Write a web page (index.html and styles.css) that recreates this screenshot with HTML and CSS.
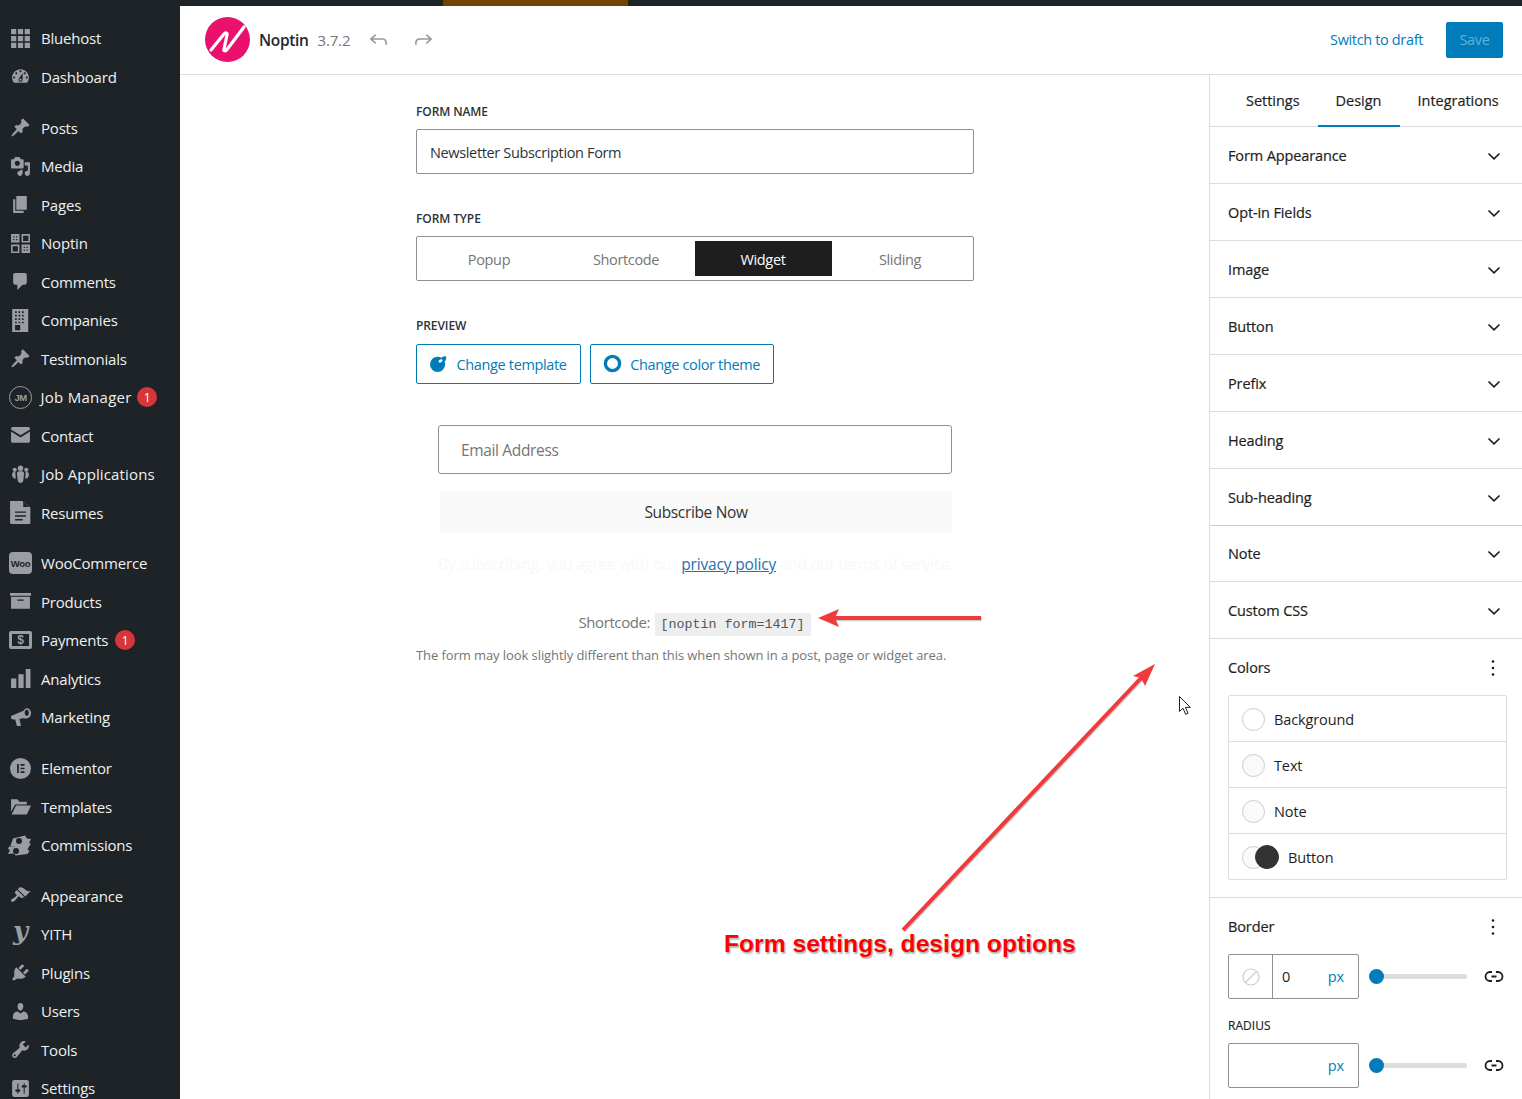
FILE: index.html
```html
<!DOCTYPE html>
<html lang="en">
<head>
<meta charset="utf-8">
<title>Noptin form editor</title>
<link rel="stylesheet" href="styles.css">
</head>
<body>
<svg class="defs" width="0" height="0" aria-hidden="true">
  <symbol id="chev" viewBox="0 0 14 9"><path d="M1.500 1.500 7 6.800l5.500-5.300" fill="none" stroke="#1e1e1e" stroke-width="1.700"/></symbol>
  <symbol id="dots" viewBox="0 0 4 18"><circle cx="2" cy="2.500" r="1.300"/><circle cx="2" cy="9" r="1.300"/><circle cx="2" cy="15.500" r="1.300"/></symbol>
  <symbol id="link" viewBox="0 0 20 13"><path d="M8 2H6a4.500 4.500 0 0 0 0 9h2M12 2h2a4.500 4.500 0 0 1 0 9h-2M7.500 6.500h5" fill="none" stroke="#1e1e1e" stroke-width="1.800"/></symbol>
</svg>
<div class="app">
  <nav class="sidebar">
    <div class="group">
      <a class="item"><svg class="ico" viewBox="0 0 20 20"><path d="M1 1h5v5H1zM7.500 1h5v5h-5zM14 1h5v5h-5zM1 7.500h5v5H1zM7.500 7.500h5v5h-5zM14 7.500h5v5h-5zM1 14h5v5H1zM7.500 14h5v5h-5zM14 14h5v5h-5z"/></svg>Bluehost</a>
      <a class="item"><svg class="ico" viewBox="0 0 20 20"><path d="M3.760 16h12.480c1.100-1.370 1.760-3.110 1.760-5 0-4.420-3.580-8-8-8s-8 3.580-8 8c0 1.890.660 3.630 1.760 5zM10 4c.550 0 1 .450 1 1s-.450 1-1 1-1-.450-1-1 .450-1 1-1zM6 6c.550 0 1 .450 1 1s-.450 1-1 1-1-.450-1-1 .450-1 1-1zm8 0c.550 0 1 .450 1 1s-.450 1-1 1-1-.450-1-1 .450-1 1-1zm-5.370 5.550L12 7v6c0 1.100-.900 2-2 2s-2-.900-2-2c0-.570.240-1.080.630-1.450zM4 10c.550 0 1 .450 1 1s-.450 1-1 1-1-.450-1-1 .450-1 1-1zm12 0c.550 0 1 .450 1 1s-.450 1-1 1-1-.450-1-1 .450-1 1-1zm-5 3c0-.550-.450-1-1-1s-1 .450-1 1 .450 1 1 1 1-.450 1-1z" fill-rule="evenodd"/></svg>Dashboard</a>
    </div>
    <div class="group">
      <a class="item"><svg class="ico" viewBox="0 0 20 20"><path d="M10.440 3.020l1.820-1.820 6.360 6.350-1.830 1.820c-1.050-.680-2.480-.570-3.410.360l-.750.750c-.920.930-1.040 2.350-.350 3.410l-1.830 1.820-2.410-2.410-2.800 2.790c-.420.420-3.380 2.710-3.800 2.290s1.860-3.390 2.280-3.810l2.790-2.790L4.100 9.360l1.830-1.820c1.050.690 2.480.570 3.400-.360l.750-.750c.930-.920 1.050-2.350.360-3.410z"/></svg>Posts</a>
      <a class="item"><svg class="ico" viewBox="0 0 20 20"><path fill-rule="evenodd" d="M13 11V4c0-.550-.450-1-1-1h-1.670L9 1H5L3.670 3H2c-.550 0-1 .450-1 1v7c0 .550.450 1 1 1h10c.550 0 1-.450 1-1zM7 4.500c1.380 0 2.500 1.120 2.500 2.500S8.380 9.500 7 9.500 4.500 8.380 4.500 7 5.620 4.500 7 4.500zM14 6h5v10.500c0 1.380-1.120 2.500-2.500 2.500S14 17.880 14 16.500s1.120-2.500 2.500-2.500c.170 0 .340.020.500.050V9h-3V6zm-4 8.050V13h2v3.500c0 1.380-1.120 2.500-2.500 2.500S7 17.880 7 16.500 8.120 14 9.500 14c.170 0 .340.020.500.050z"/></svg>Media</a>
      <a class="item"><svg class="ico" viewBox="0 0 20 20"><path d="M6 15V2h10v13H6zm-1 1h8v2H3V5h2v11z"/></svg>Pages</a>
      <a class="item"><svg class="ico" viewBox="0 0 20 20"><path fill-rule="evenodd" d="M1 1h8v8H1zM3 3v1.300h1.300V3zm2.700 0v1.300H7V3zM3 5.700V7h1.300V5.700zm2.700 0V7H7V5.700zM11 1h8v8h-8zm1.500 1.500v5h5v-5zM1 11h8v8H1zm1.500 1.500v5h5v-5zM11 11h8v8h-8zm2 2v1.300h1.300V13zm2.700 0v1.300H17V13zM13 15.700V17h1.300v-1.300zm2.700 0V17H17v-1.300z"/></svg>Noptin</a>
      <a class="item"><svg class="ico" viewBox="0 0 20 20"><path d="M5 2h9c1.100 0 2 .900 2 2v7c0 1.100-.900 2-2 2h-2l-5 5v-5H5c-1.100 0-2-.900-2-2V4c0-1.100.900-2 2-2z"/></svg>Comments</a>
      <a class="item"><svg class="ico tall" viewBox="1.100 0 18.300 20"><path fill-rule="evenodd" d="M3 0h14v20H3zM5.500 2v1.500H7V2zm3 0v1.500H10V2zm3 0v1.500H13V2zM5.500 5v1.500H7V5zm3 0v1.500H10V5zm3 0v1.500H13V5zM5.500 8v1.500H7V8zm3 0v1.500H10V8zm3 0v1.500H13V8zM5.500 11v1.500H7V11zm3 0v1.500H10V11zm3 0v1.500H13V11zM5.500 14v4.500H10V14z"/></svg>Companies</a>
      <a class="item"><svg class="ico" viewBox="0 0 20 20"><path d="M10.440 3.020l1.820-1.820 6.360 6.350-1.830 1.820c-1.050-.680-2.480-.570-3.410.360l-.750.750c-.920.930-1.040 2.350-.350 3.410l-1.830 1.820-2.410-2.410-2.800 2.790c-.420.420-3.380 2.710-3.800 2.290s1.860-3.390 2.280-3.810l2.790-2.790L4.100 9.360l1.830-1.820c1.050.690 2.480.570 3.400-.360l.750-.750c.930-.920 1.050-2.350.360-3.410z"/></svg>Testimonials</a>
      <a class="item tight job-m"><span class="jm">JM</span>Job Manager<span class="badge">1</span></a>
      <a class="item"><svg class="ico" viewBox="0 0 20 20"><path d="M1 3.500c0-.800.700-1.500 1.500-1.500h15c.800 0 1.500.700 1.500 1.500v.700l-9 5.500-9-5.500zM1 6.300l9 5.500 9-5.500V15.500c0 .800-.700 1.500-1.500 1.500h-15c-.800 0-1.500-.700-1.500-1.500z"/></svg>Contact</a>
      <a class="item job-a"><svg class="ico" viewBox="0 0 20 20"><circle cx="10" cy="4" r="2.600"/><circle cx="4.500" cy="5.500" r="2"/><circle cx="15.500" cy="5.500" r="2"/><path d="M6.600 9c0-1 1-2 2-2h2.800c1 0 2 1 2 2l-.600 6c-.200 1.500-1.200 3-2.800 3s-2.600-1.500-2.800-3zM2 9.500c0-1 .800-1.800 1.800-1.800h1.300L5.500 14c-1.800 0-3.500-1.500-3.500-3.500zM18 9.500c0-1-.800-1.800-1.800-1.800h-1.300L14.500 14c1.800 0 3.500-1.500 3.500-3.500z"/></svg>Job Applications</a>
      <a class="item"><svg class="ico tall" viewBox="0 0 19 21"><path fill-rule="evenodd" d="M0 0h11l7.500 6v14a1 1 0 0 1-1 1H1a1 1 0 0 1-1-1zM4.500 9.500v1.300h10V9.500zm0 3.500v1.300h10V13zm0 3.500v1.300h7v-1.300zM12 1v4.500h5.500z"/></svg>Resumes</a>
    </div>
    <div class="group">
      <a class="item"><span class="woo">Woo</span>WooCommerce</a>
      <a class="item"><svg class="ico" viewBox="0 0 20 20"><path d="M0 2h20v2.500H0zM1 5.500h18V17H1zM7 8v1.200h6V8z" fill-rule="evenodd"/></svg>Products</a>
      <a class="item"><span class="pay">$</span>Payments<span class="badge">1</span></a>
      <a class="item"><svg class="ico" viewBox="0 0 20 20"><path d="M1 10h5v9H1zM8 6h5v13H8zM15 1h4.500v18H15z"/></svg>Analytics</a>
      <a class="item"><svg class="ico" viewBox="0 0 20 20"><path fill-rule="evenodd" d="M1 8.500 13 3.500c1-3 6-3.500 7 1.500.500 4-2.500 6.500-5.500 6L12 10.800 9 11.500l1.500 6.500H6.500L5 12H3a2 2 0 0 1-2-2zM16 2.500c-1.500 0-2 1.500-2 3s1 3 2 3 2-1.500 2-3-.600-3-2-3z"/></svg>Marketing</a>
    </div>
    <div class="group">
      <a class="item"><svg class="ico" viewBox="0 0 20 20"><path fill-rule="evenodd" d="M10 0a10 10 0 1 1 0 20 10 10 0 0 1 0-20zM6.800 5.800v8.400h1.600V5.800zm3.200 0v1.500h3.800V5.800zm0 3.400v1.500h3.800V9.200zm0 3.500v1.500h3.800v-1.500z"/></svg>Elementor</a>
      <a class="item"><svg class="ico" viewBox="0 0 20 20"><path d="M1 3h6l2 2.500h7V8H5L1 15zM5.800 9H20l-4 8.500H1.500z"/></svg>Templates</a>
      <a class="item"><svg class="ico wide" viewBox="0 0 24 20"><path fill-rule="evenodd" d="M5 3 17 0l2 3 4 .5-2 4 2 1-2 2.500H8l-6 .5zM1 11h20l-1.500 3 2 1.500-2 3-12 1.500-1.500-2-6 .5 2-4-2-1zM11 2.500a3 3 0 1 0 .01 6 3 3 0 0 0 0-6zM8 12.500a3 3 0 1 0 .01 6 3 3 0 0 0 0-6z"/></svg>Commissions</a>
    </div>
    <div class="group">
      <a class="item"><svg class="ico" viewBox="0 0 20 20"><path d="M14.480 11.060L7.410 3.990l1.500-1.500c.500-.560 2.300-.470 3.510.320 1.210.800 1.430 1.280 2.910 2.100 1.180.640 2.450 1.260 4.450.850zm-.710.710L6.700 4.700 4.930 6.470c-.390.390-.390 1.020 0 1.410l1.060 1.060c.390.390.390 1.030 0 1.420-.600.600-1.430 1.110-2.210 1.690-.350.260-.700.530-1.010.840C1.430 13.230.400 14.800 1.370 15.780c.980.980 2.550-.050 3.900-1.410.310-.310.580-.660.850-1.020.570-.780 1.080-1.610 1.690-2.210.390-.390 1.020-.390 1.410 0l1.060 1.060c.390.390 1.020.390 1.410 0z"/></svg>Appearance</a>
      <a class="item"><span class="yith">y</span>YITH</a>
      <a class="item"><svg class="ico" viewBox="0 0 20 20"><path d="M13.110 4.360L9.870 7.600 8 5.730l3.240-3.240c.350-.340 1.050-.200 1.560.320.520.510.660 1.210.310 1.550zm-8 1.770l.910-1.120 9.010 9.010-1.190.840c-.710.710-2.630 1.160-3.820 1.160H6.140L4.900 17.260c-.590.590-1.540.590-2.120 0-.590-.580-.590-1.530 0-2.120l1.240-1.240v-3.880c0-1.130.400-3.190 1.090-3.890zm7.260 3.970l3.240-3.240c.340-.350 1.040-.210 1.550.31.520.51.660 1.210.31 1.550l-3.240 3.250z"/></svg>Plugins</a>
      <a class="item"><svg class="ico" viewBox="0 0 20 20"><path d="M10 9.250c-2.270 0-2.730-3.440-2.730-3.440C7 4.020 7.820 2 9.970 2c2.160 0 2.980 2.020 2.710 3.810 0 0-.410 3.440-2.680 3.440zm0 2.570L12.720 10c2.390 0 4.520 2.330 4.520 4.530v2.490s-3.650 1.130-7.240 1.130c-3.650 0-7.240-1.130-7.240-1.130v-2.490c0-2.250 1.940-4.480 4.470-4.480z"/></svg>Users</a>
      <a class="item"><svg class="ico" viewBox="0 0 20 20"><path fill-rule="evenodd" d="M16.680 9.770c-1.340 1.340-3.300 1.670-4.950.990l-5.410 6.520c-.990.990-2.590.990-3.580 0s-.990-2.590 0-3.570l6.520-5.420c-.680-1.650-.350-3.610.990-4.950 1.280-1.280 3.120-1.620 4.720-1.060l-2.890 2.890 2.820 2.820 2.860-2.870c.530 1.580.180 3.390-1.080 4.650zM3.810 16.210c.400.390 1.040.390 1.430 0 .400-.400.400-1.040 0-1.430-.390-.400-1.030-.400-1.430 0-.390.390-.390 1.030 0 1.430z"/></svg>Tools</a>
      <a class="item"><svg class="ico" viewBox="0 0 20 20"><path fill-rule="evenodd" d="M18 16V4c0-1.100-.900-2-2-2H4c-1.100 0-2 .900-2 2v12c0 1.100.900 2 2 2h12c1.100 0 2-.900 2-2zM8 11h1c.550 0 1 .450 1 1s-.450 1-1 1H8v1.500c0 .280-.220.500-.500.500s-.500-.220-.500-.500V13H6c-.550 0-1-.450-1-1s.450-1 1-1h1V5.500c0-.280.220-.500.500-.500s.500.220.500.500V11zm5-2h-1c-.550 0-1-.450-1-1s.450-1 1-1h1V5.500c0-.280.220-.500.500-.500s.500.220.500.500V7h1c.550 0 1 .450 1 1s-.450 1-1 1h-1v5.500c0 .280-.220.500-.500.500s-.500-.220-.500-.500V9z"/></svg>Settings</a>
    </div>
  </nav>
  <div class="main">
    <div class="strip"><span class="strip-accent"></span></div>
    <header class="topbar">
      <div class="brand">
        <svg class="logo" viewBox="0 0 45 45"><circle cx="22.500" cy="22.500" r="22.500" fill="#e9116b"/><path d="M6 33 19 17c1.500-1.800 3.500-1 3 1l-3 14c-.400 2 1.500 2.500 3 .5L39 10" fill="none" stroke="#fff" stroke-width="3.200" stroke-linecap="round" stroke-linejoin="round"/></svg>
        <span class="brand-name">Noptin</span>
        <span class="brand-ver">3.7.2</span>
        <svg class="hist" viewBox="0 0 20 14"><path d="M7 1.500 2 6l5 4.500M2.500 6H14c2.500 0 4 1.500 4 4v2" fill="none" stroke="#999" stroke-width="1.700"/></svg>
        <svg class="hist" viewBox="0 0 20 14"><path d="M13 1.500 18 6l-5 4.500M17.500 6H6C3.500 6 2 7.500 2 10v2" fill="none" stroke="#999" stroke-width="1.700"/></svg>
      </div>
      <div class="actions">
        <a class="draft">Switch to draft</a>
        <span class="save">Save</span>
      </div>
    </header>
    <div class="workspace">
      <section class="canvas">
        <div class="form-col">
          <div class="label l-name">FORM NAME</div>
          <div class="name-input">Newsletter Subscription Form</div>
          <div class="label l-type">FORM TYPE</div>
          <div class="segments">
            <span class="seg">Popup</span><span class="seg">Shortcode</span><span class="seg on">Widget</span><span class="seg">Sliding</span>
          </div>
          <div class="label l-prev">PREVIEW</div>
          <div class="btns">
            <a class="outline"><svg class="b-ico" viewBox="0 0 20 20"><path fill-rule="evenodd" d="M9 3a8 8 0 1 0 8 8c0-1-.200-2-.500-3 1.500-1.500 2-3.500 1.500-5.500-2-.300-4 .500-5 1.500A8 8 0 0 0 9 3zM13 5.500c-1.500 0-3 1.200-3 2.300s1.500 1.400 3 .5 1.700-2.800 0-2.800z"/></svg>Change template</a>
            <a class="outline"><svg class="b-ico" viewBox="0 0 20 20"><circle cx="10" cy="10" r="7.500" fill="none" stroke="#007cba" stroke-width="3.500"/></svg>Change color theme</a>
          </div>
          <div class="preview">
            <div class="email">Email Address</div>
            <div class="subscribe">Subscribe Now</div>
            <p class="terms"><span class="faint">By subscribing, you agree with our</span> <a class="policy">privacy policy</a> <span class="faint">and our terms of service.</span></p>
          </div>
          <div class="shortcode">Shortcode: <code class="code">[noptin form=1417]</code></div>
          <p class="hint">The form may look slightly different than this when shown in a post, page or widget area.</p>
        </div>
        <svg class="overlay" viewBox="180 75 1029 1024">
          <g fill="#b9b9b9" stroke="#b9b9b9" transform="translate(.8 1.200)" opacity=".7">
            <path d="M981 618H835" stroke-width="4" fill="none"/>
            <path d="M903 930 1143 676" stroke-width="4" fill="none"/>
          </g>
          <path d="M981 618H834" stroke="#ef3b3e" stroke-width="4" fill="none"/>
          <path d="M818 618 839 609 835 618 839 627z" fill="#ef3b3e"/>
          <path d="M903 930 1142 677" stroke="#ef3b3e" stroke-width="4" fill="none"/>
          <path d="M1155 664 1145 686 1141 678 1133 676z" fill="#ef3b3e"/>
          <path d="M1179.500 696.500v15l3.500-3.300 2.600 6 2.400-1-2.600-5.800h5z" fill="#fff" stroke="#222" stroke-width="1"/>
        </svg>
        <div class="callout">Form settings, design options</div>
      </section>
      <aside class="panel">
        <div class="tabs"><span class="tab">Settings</span><span class="tab active">Design</span><span class="tab">Integrations</span></div>
        <div class="acc"><span>Form Appearance</span><svg class="chev"><use href="#chev"/></svg></div>
        <div class="acc"><span>Opt-in Fields</span><svg class="chev"><use href="#chev"/></svg></div>
        <div class="acc"><span>Image</span><svg class="chev"><use href="#chev"/></svg></div>
        <div class="acc"><span>Button</span><svg class="chev"><use href="#chev"/></svg></div>
        <div class="acc"><span>Prefix</span><svg class="chev"><use href="#chev"/></svg></div>
        <div class="acc"><span>Heading</span><svg class="chev"><use href="#chev"/></svg></div>
        <div class="acc thick"><span>Sub-heading</span><svg class="chev"><use href="#chev"/></svg></div>
        <div class="acc short"><span>Note</span><svg class="chev"><use href="#chev"/></svg></div>
        <div class="acc"><span>Custom CSS</span><svg class="chev"><use href="#chev"/></svg></div>
        <div class="block colors">
          <div class="block-head"><span>Colors</span><svg class="dots"><use href="#dots"/></svg></div>
          <div class="swatches">
            <div class="swatch"><i class="dot"></i>Background</div>
            <div class="swatch"><i class="dot soft"></i>Text</div>
            <div class="swatch"><i class="dot soft"></i>Note</div>
            <div class="swatch"><i class="dot soft"></i><i class="dot dark"></i>Button</div>
          </div>
        </div>
        <div class="block border-block">
          <div class="block-head"><span>Border</span><svg class="dots"><use href="#dots"/></svg></div>
          <div class="ctl">
            <div class="unit-box">
              <span class="none"><svg viewBox="0 0 18 18"><circle cx="9" cy="9" r="8" fill="none" stroke="#ccc" stroke-width="1.200"/><path d="M3.500 14.500 14.500 3.500" stroke="#ccc" stroke-width="1.200"/></svg></span>
              <span class="val">0</span><span class="px">px</span>
            </div>
            <div class="slider"><i class="thumb"></i></div>
            <svg class="link"><use href="#link"/></svg>
          </div>
          <div class="radius-label">RADIUS</div>
          <div class="ctl">
            <div class="unit-box"><span class="val"></span><span class="px">px</span></div>
            <div class="slider"><i class="thumb"></i></div>
            <svg class="link"><use href="#link"/></svg>
          </div>
        </div>
      </aside>
    </div>
  </div>
</div>
</body>
</html>
```
FILE: styles.css
```css
* { box-sizing: border-box; }
html, body { margin: 0; height: 100%; }
body { font-family: "Open Sans", "Noto Sans", sans-serif; font-size: 14.5px; letter-spacing: -0.35px; color: #1e1e1e; background: #fff; overflow: hidden; }
.defs { position: absolute; }
.app { display: flex; width: 1522px; height: 1099px; overflow: hidden; }

/* sidebar */
.sidebar { width: 180px; flex: none; background: #1d2327; padding-top: 19px; color: #f0f0f1; }
.group { margin-bottom: 12.300px; }
.item { display: flex; align-items: center; height: 38.500px; padding-left: 10px; font-size: 15px; gap: 10px; white-space: nowrap; letter-spacing: -.2px; }
.item.tight { padding-left: 9px; gap: 8.500px; }
.job-m { letter-spacing: .27px; }
.job-a { letter-spacing: .14px; }
.ico { width: 21px; height: 21px; flex: none; fill: #9a9da2; }
.ico.wide { width: 24px; margin-left: -2px; margin-right: -1px; }
.ico.tall { height: 23px; }
.jm { width: 23px; height: 23px; border: 1.500px solid #9a9da2; border-radius: 50%; display: flex; align-items: center; justify-content: center; font: 700 9.500px "Liberation Sans", sans-serif; color: #9a9da2; flex: none; letter-spacing: -.5px; }
.woo { width: 23px; height: 22px; margin-left: -1px; margin-right: -1px; background: #9a9da2; color: #1d2327; border-radius: 4px; font: 700 9.500px "Liberation Sans", sans-serif; display: flex; align-items: center; justify-content: center; flex: none; letter-spacing: -.3px; }
.pay { width: 23px; height: 18px; margin-left: -1px; margin-right: -1px; border: 3px solid #9a9da2; border-radius: 2px; color: #9a9da2; font: 700 12px "Liberation Sans", sans-serif; display: flex; align-items: center; justify-content: center; flex: none; }
.yith { width: 21px; height: 21px; color: #9a9da2; font: italic 700 26px/14px "DejaVu Serif", serif; flex: none; text-align: center; }
.badge { width: 20px; height: 20px; background: #d63638; color: #fff; border-radius: 50%; font-size: 12px; letter-spacing: 0; display: flex; align-items: center; justify-content: center; margin-left: -3px; }

/* main */
.main { flex: 1; display: flex; flex-direction: column; min-width: 0; }
.strip { height: 6px; background: #1d2327; flex: none; }
.strip-accent { display: block; width: 185px; height: 6px; margin-left: 263px; background: #744200; }
.topbar { height: 69px; flex: none; border-bottom: 1px solid #ddd; display: flex; align-items: center; justify-content: space-between; padding: 0 19px 1px 25px; }
.brand { display: flex; align-items: center; }
.logo { width: 45px; height: 45px; margin-right: 9px; }
.brand-name { font-size: 15.500px; font-weight: 600; color: #23282d; margin-right: 9px; }
.brand-ver { font-size: 15px; color: #757575; margin-right: 19px; letter-spacing: -.15px; }
.hist { width: 19px; height: 14px; margin-right: 26px; margin-top: 1px; }
.actions { display: flex; align-items: center; gap: 23px; }
.draft { color: #007cba; font-size: 14.500px; }
.save { width: 57px; height: 36px; background: #007cba; color: #66b0d6; border-radius: 2px; display: flex; align-items: center; justify-content: center; }

.workspace { flex: 1; display: flex; min-height: 0; }
.canvas { flex: 1; position: relative; min-width: 0; }
.form-col { width: 558px; margin-left: 236px; padding-top: 29px; color: #50575e; }
.label { font-size: 12px; font-weight: 600; line-height: 16px; color: #2c3338; letter-spacing: -.1px; }
.l-name { margin-bottom: 9px; }
.name-input { height: 45px; border: 1px solid #8c8f94; border-radius: 2px; padding: 1px 13px 0; display: flex; align-items: center; color: #2c3338; }
.l-type { margin: 37px 0 9px; }
.segments { height: 45px; border: 1px solid #8c8f94; border-radius: 2px; padding: 4px 3.500px; display: grid; grid-template-columns: repeat(4, 137px); }
.seg { display: flex; align-items: center; justify-content: center; color: #757575; padding-top: 1px; }
.seg.on { background: #1e1e1e; color: #fff; }
.l-prev { margin: 37px 0 10px; }
.btns { display: flex; gap: 9px; }
.outline { height: 40px; border: 1px solid #007cba; border-radius: 2px; padding: 0 13px 0 12px; display: flex; align-items: center; gap: 8.500px; color: #007cba; white-space: nowrap; }
.b-ico { width: 19px; height: 19px; fill: #007cba; flex: none; margin-bottom: 2px; }
.preview { margin: 41px 22px 0; }
.email { height: 49px; width: 514px; border: 1px solid #8c8f94; border-radius: 3px; padding: 0 22px; display: flex; align-items: center; font-size: 15.500px; color: #757575; }
.subscribe { height: 42px; margin: 17px 0 0 2px; width: 512px; background: #f9f9f9; display: flex; align-items: center; justify-content: center; font-size: 15.500px; color: #333; }
.terms { margin: 21px 0 0; padding-right: 6px; text-align: center; font-size: 15.500px; line-height: 21px; white-space: nowrap; letter-spacing: -.2px; }
.faint { color: #f8f8f9; letter-spacing: -.26px; }
.policy { color: #2271b1; text-decoration: underline; letter-spacing: -.16px; }
.shortcode { margin-top: 36px; text-align: center; color: #757575; font-size: 15px; line-height: 23px; padding-right: 1px; letter-spacing: -.4px; }
.code { display: inline-block; height: 23px; padding: 0 6px; margin-left: 1px; background: #eee; font: 13.330px/23px "Liberation Mono", monospace; color: #50575e; letter-spacing: 0; }
.hint { margin: 10px 0 0; font-size: 13px; color: #757575; line-height: 18px; white-space: nowrap; letter-spacing: -.08px; }
.overlay { position: absolute; left: 0; top: 0; width: 1029px; height: 1024px; pointer-events: none; }
.callout { position: absolute; left: 544px; top: 854px; font: 700 24.650px/30px "Liberation Sans", sans-serif; color: #f00; letter-spacing: 0; white-space: nowrap; text-shadow: 1px 1px 0 #bbb, -1px -1px 0 #fff, 1px 2px 1px #bbb; }

/* panel */
.panel { width: 313px; flex: none; border-left: 1px solid #ddd; letter-spacing: -.12px; }
.tabs { height: 52px; border-bottom: 1px solid #ddd; display: flex; padding-left: 18px; }
.tab { padding: 0 18px 2px; display: flex; align-items: center; height: 52px; -webkit-text-stroke: .2px; letter-spacing: -.02px; }
.tab.active { border-bottom: 2px solid #007cba; padding-bottom: 0; }
.acc { height: 57px; border-bottom: 1px solid #ddd; padding: 1px 21px 0 18px; display: flex; align-items: center; justify-content: space-between; }
.acc > span, .block-head > span { -webkit-text-stroke: .2px; }
.acc.thick { border-bottom-color: #ccc; }
.acc.short { height: 56px; padding-top: 0; }
.chev { width: 14px; height: 9px; margin-top: 1px; }
.block { padding: 0 15px 0 18px; }
.colors { height: 259px; border-bottom: 1px solid #ddd; }
.block-head { height: 56px; display: flex; align-items: center; justify-content: space-between; padding-right: 12px; padding-top: 1px; }
.dots { width: 4px; height: 18px; fill: #1e1e1e; }
.swatches { border: 1px solid #ddd; border-radius: 2px; }
.swatch { height: 46px; display: flex; align-items: center; padding: 1px 0 0 13px; border-bottom: 1px solid #ddd; gap: 9px; }
.swatch:last-child { height: 45px; border-bottom: 0; }
.dot { width: 23px; height: 23px; border-radius: 50%; border: 1px solid #ccc; background: #fff; flex: none; }
.dot.soft { background: #fafafa; }
.dot.dark { width: 24px; height: 24px; background: #333; border-color: #333; margin-left: -19px; }
.ctl { display: flex; align-items: center; height: 45px; }
.unit-box { width: 131px; height: 45px; border: 1px solid #8c8f94; border-radius: 2px; display: flex; align-items: center; flex: none; }
.none { width: 44px; height: 100%; border-right: 1px solid #8c8f94; display: flex; align-items: center; justify-content: center; flex: none; }
.none svg { width: 18px; height: 18px; }
.val { flex: 1; padding-left: 9px; color: #1e1e1e; }
.px { color: #007cba; padding-right: 14px; }
.slider { position: relative; width: 90px; height: 5px; margin: 0 17px 0 18px; background: #ddd; border-radius: 3px; flex: none; }
.thumb { position: absolute; left: -8px; top: -5px; width: 15px; height: 15px; border-radius: 50%; background: #007cba; }
.link { width: 20px; height: 13px; flex: none; }
.radius-label { margin: 18px 0 9px; font-size: 12px; line-height: 17px; letter-spacing: .02px; -webkit-text-stroke: .15px; }
```
